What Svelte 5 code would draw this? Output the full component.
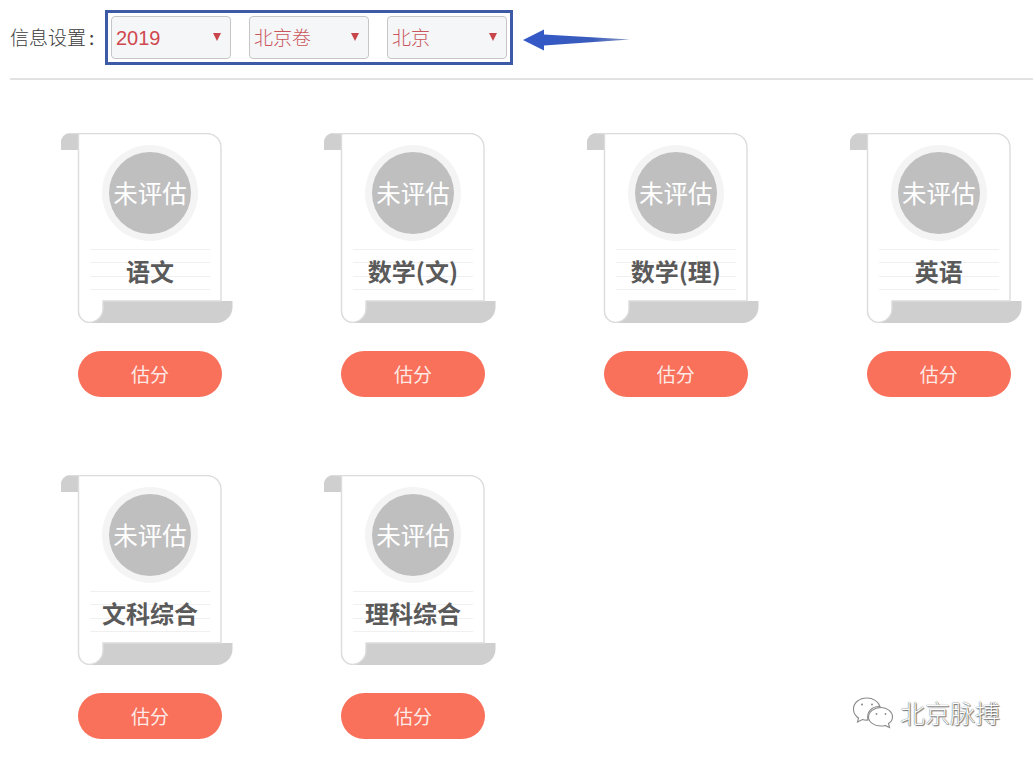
<script>
  const selects = [
    { value: "2019", latin: true },
    { value: "北京卷" },
    { value: "北京" },
  ];
  const subjects = ["语文", "数学(文)", "数学(理)", "英语", "文科综合", "理科综合"];
</script>

<div class="page">
  <div class="toolbar">
    <span class="label">信息设置<b>:</b></span>
    <div class="select-box">
      {#each selects as s}
        <div class="select" class:latin={s.latin}>
          <span>{s.value}</span>
          <i class="caret"></i>
        </div>
      {/each}
    </div>
    <svg class="arrow" width="110" height="24" viewBox="0 0 110 24">
      <defs>
        <linearGradient id="tail" x1="0" x2="1" y1="0" y2="0">
          <stop offset="0" stop-color="#3358c8" />
          <stop offset="0.65" stop-color="#3a5cbc" />
          <stop offset="1" stop-color="#8d9cc4" />
        </linearGradient>
      </defs>
      <path d="M1 12 L22 1.5 V6.5 L108 11.5 L22 17.5 V22.5 Z" fill="url(#tail)" />
    </svg>
  </div>

  <div class="grid">
    {#each subjects as name}
      <div class="item">
        <div class="scroll">
          <svg class="paper" width="172" height="190" viewBox="0 0 172 190">
            <path d="M0 17 V9 a9 9 0 0 1 9 -9 H18 V17 Z" fill="#cfcfcf" />
            <path d="M30 168 H171.5 V174 a16 16 0 0 1 -16 16 H30 Z" fill="#cfcfcf" />
            <path
              d="M9 0.5 H146 a14 14 0 0 1 14 14 V168 H42 V176 a14 14 0 0 1 -14 13.5 a11 11 0 0 1 -10.5 -11 V0.5"
              fill="#fff"
              stroke="#dcdcdc"
              stroke-width="1.4"
            />
          </svg>
          <div class="ring"><div class="disc">未评估</div></div>
          <div class="title">{name}</div>
        </div>
        <div class="btn">估分</div>
      </div>
    {/each}
  </div>

  <div class="mark">
    <svg width="42" height="34" viewBox="0 0 42 34" fill="#fff" stroke="#8a8a8a" stroke-width="1.1">
      <path d="M15 3 C7 3 1.5 8 1.5 14 C1.5 18 3.5 21 6.5 23 L5.5 27 L10.5 24.5 C12 25 14 25.2 16 25 C14 17 20 11 28 11.5 C26.5 6.5 21 3 15 3 Z" />
      <path d="M29 12.5 C22 12.5 16.5 17 16.5 22 C16.5 27 22 31 29 31 C30.5 31 32 30.8 33 30.4 L37.5 32.5 L36.5 28.5 C39 27 40.5 24.8 40.5 22 C40.5 17 35.5 12.5 29 12.5 Z" />
      <circle cx="10" cy="9.5" r="1" fill="#8a8a8a" stroke="none" />
      <circle cx="20" cy="9.5" r="1" fill="#8a8a8a" stroke="none" />
      <circle cx="24.5" cy="19" r="0.9" fill="#8a8a8a" stroke="none" />
      <circle cx="33.5" cy="19" r="0.9" fill="#8a8a8a" stroke="none" />
    </svg>
    <span>北京脉搏</span>
  </div>
</div>

<style>
  :global(body) {
    margin: 0;
    background: #fff;
  }
  .page {
    position: relative;
    width: 1033px;
    height: 758px;
    overflow: hidden;
    font-family: "Noto Sans CJK SC", "Liberation Sans", sans-serif;
  }
  .toolbar {
    display: flex;
    align-items: center;
    box-sizing: border-box;
    height: 70px;
    margin: 10px 0 0 10px;
    padding-bottom: 13px;
    border-bottom: 2px solid #e2e2e2;
  }
  .label {
    width: 95px;
    margin-top: -2px;
    font-size: 19px;
    font-weight: 300;
    color: #3a3a3a;
    white-space: nowrap;
  }
  .label b {
    margin-left: 3px;
    font-weight: 400;
  }
  .select-box {
    display: flex;
    gap: 18px;
    padding: 3px;
    border: 3px solid #3c5aa6;
  }
  .select {
    display: flex;
    align-items: center;
    justify-content: space-between;
    box-sizing: border-box;
    width: 120px;
    height: 43px;
    padding: 0 9px 0 4px;
    background: #f5f6f8;
    border: 1px solid #c6c6c6;
    border-radius: 4px;
    color: #c9555a;
    font-size: 19px;
    font-weight: 300;
  }
  .select span {
    margin-top: -3px;
  }
  .select.latin {
    font-family: "Liberation Sans", sans-serif;
    font-size: 20px;
    font-weight: 400;
    color: #d0484f;
  }
  .select.latin span {
    margin-top: 1px;
  }
  .caret {
    width: 0;
    height: 0;
    margin-bottom: 2px;
    border-left: 4px solid transparent;
    border-right: 4px solid transparent;
    border-top: 8px solid #c9454c;
  }
  .arrow {
    margin: 4px 0 0 9px;
  }
  .grid {
    display: grid;
    grid-template-columns: repeat(4, 262.9px);
    row-gap: 78px;
    padding: 53px 0 0 61px;
  }
  .scroll {
    position: relative;
    width: 172px;
    height: 190px;
    display: flex;
    flex-direction: column;
    align-items: center;
  }
  .paper {
    position: absolute;
    top: 0;
    left: 0;
  }
  .ring {
    position: relative;
    box-sizing: border-box;
    width: 96px;
    height: 96px;
    margin: 12px 0 0 6px;
    padding: 7px;
    border-radius: 50%;
    background: #f4f4f4;
  }
  .disc {
    display: flex;
    align-items: center;
    justify-content: center;
    width: 82px;
    height: 82px;
    padding-bottom: 2px;
    box-sizing: border-box;
    border-radius: 50%;
    background: #bfbfbf;
    color: #fff;
    font-size: 24.5px;
    white-space: nowrap;
  }
  .title {
    position: relative;
    box-sizing: border-box;
    width: 120px;
    height: 41px;
    margin: 8px 0 0 6px;
    text-align: center;
    font-size: 24px;
    font-weight: 700;
    line-height: 43px;
    color: #5a5a5a;
    white-space: nowrap;
    background: repeating-linear-gradient(to bottom, #f0f0f0 0 1px, transparent 1px 13.4px);
    border-bottom: 1px solid #f0f0f0;
  }
  .btn {
    width: 144px;
    height: 46px;
    margin: 28px 0 0 17px;
    border-radius: 23px;
    background: #f9705b;
    color: #fdeae6;
    font-size: 19px;
    line-height: 46px;
    text-align: center;
  }
  .mark {
    position: absolute;
    left: 852px;
    top: 695px;
    display: flex;
    align-items: center;
    gap: 6px;
  }
  .mark span {
    font-size: 25px;
    font-weight: 300;
    color: #fff;
    text-shadow: 0 0 1px #333, 1px 1px 1px #777;
    line-height: 34px;
  }
</style>
